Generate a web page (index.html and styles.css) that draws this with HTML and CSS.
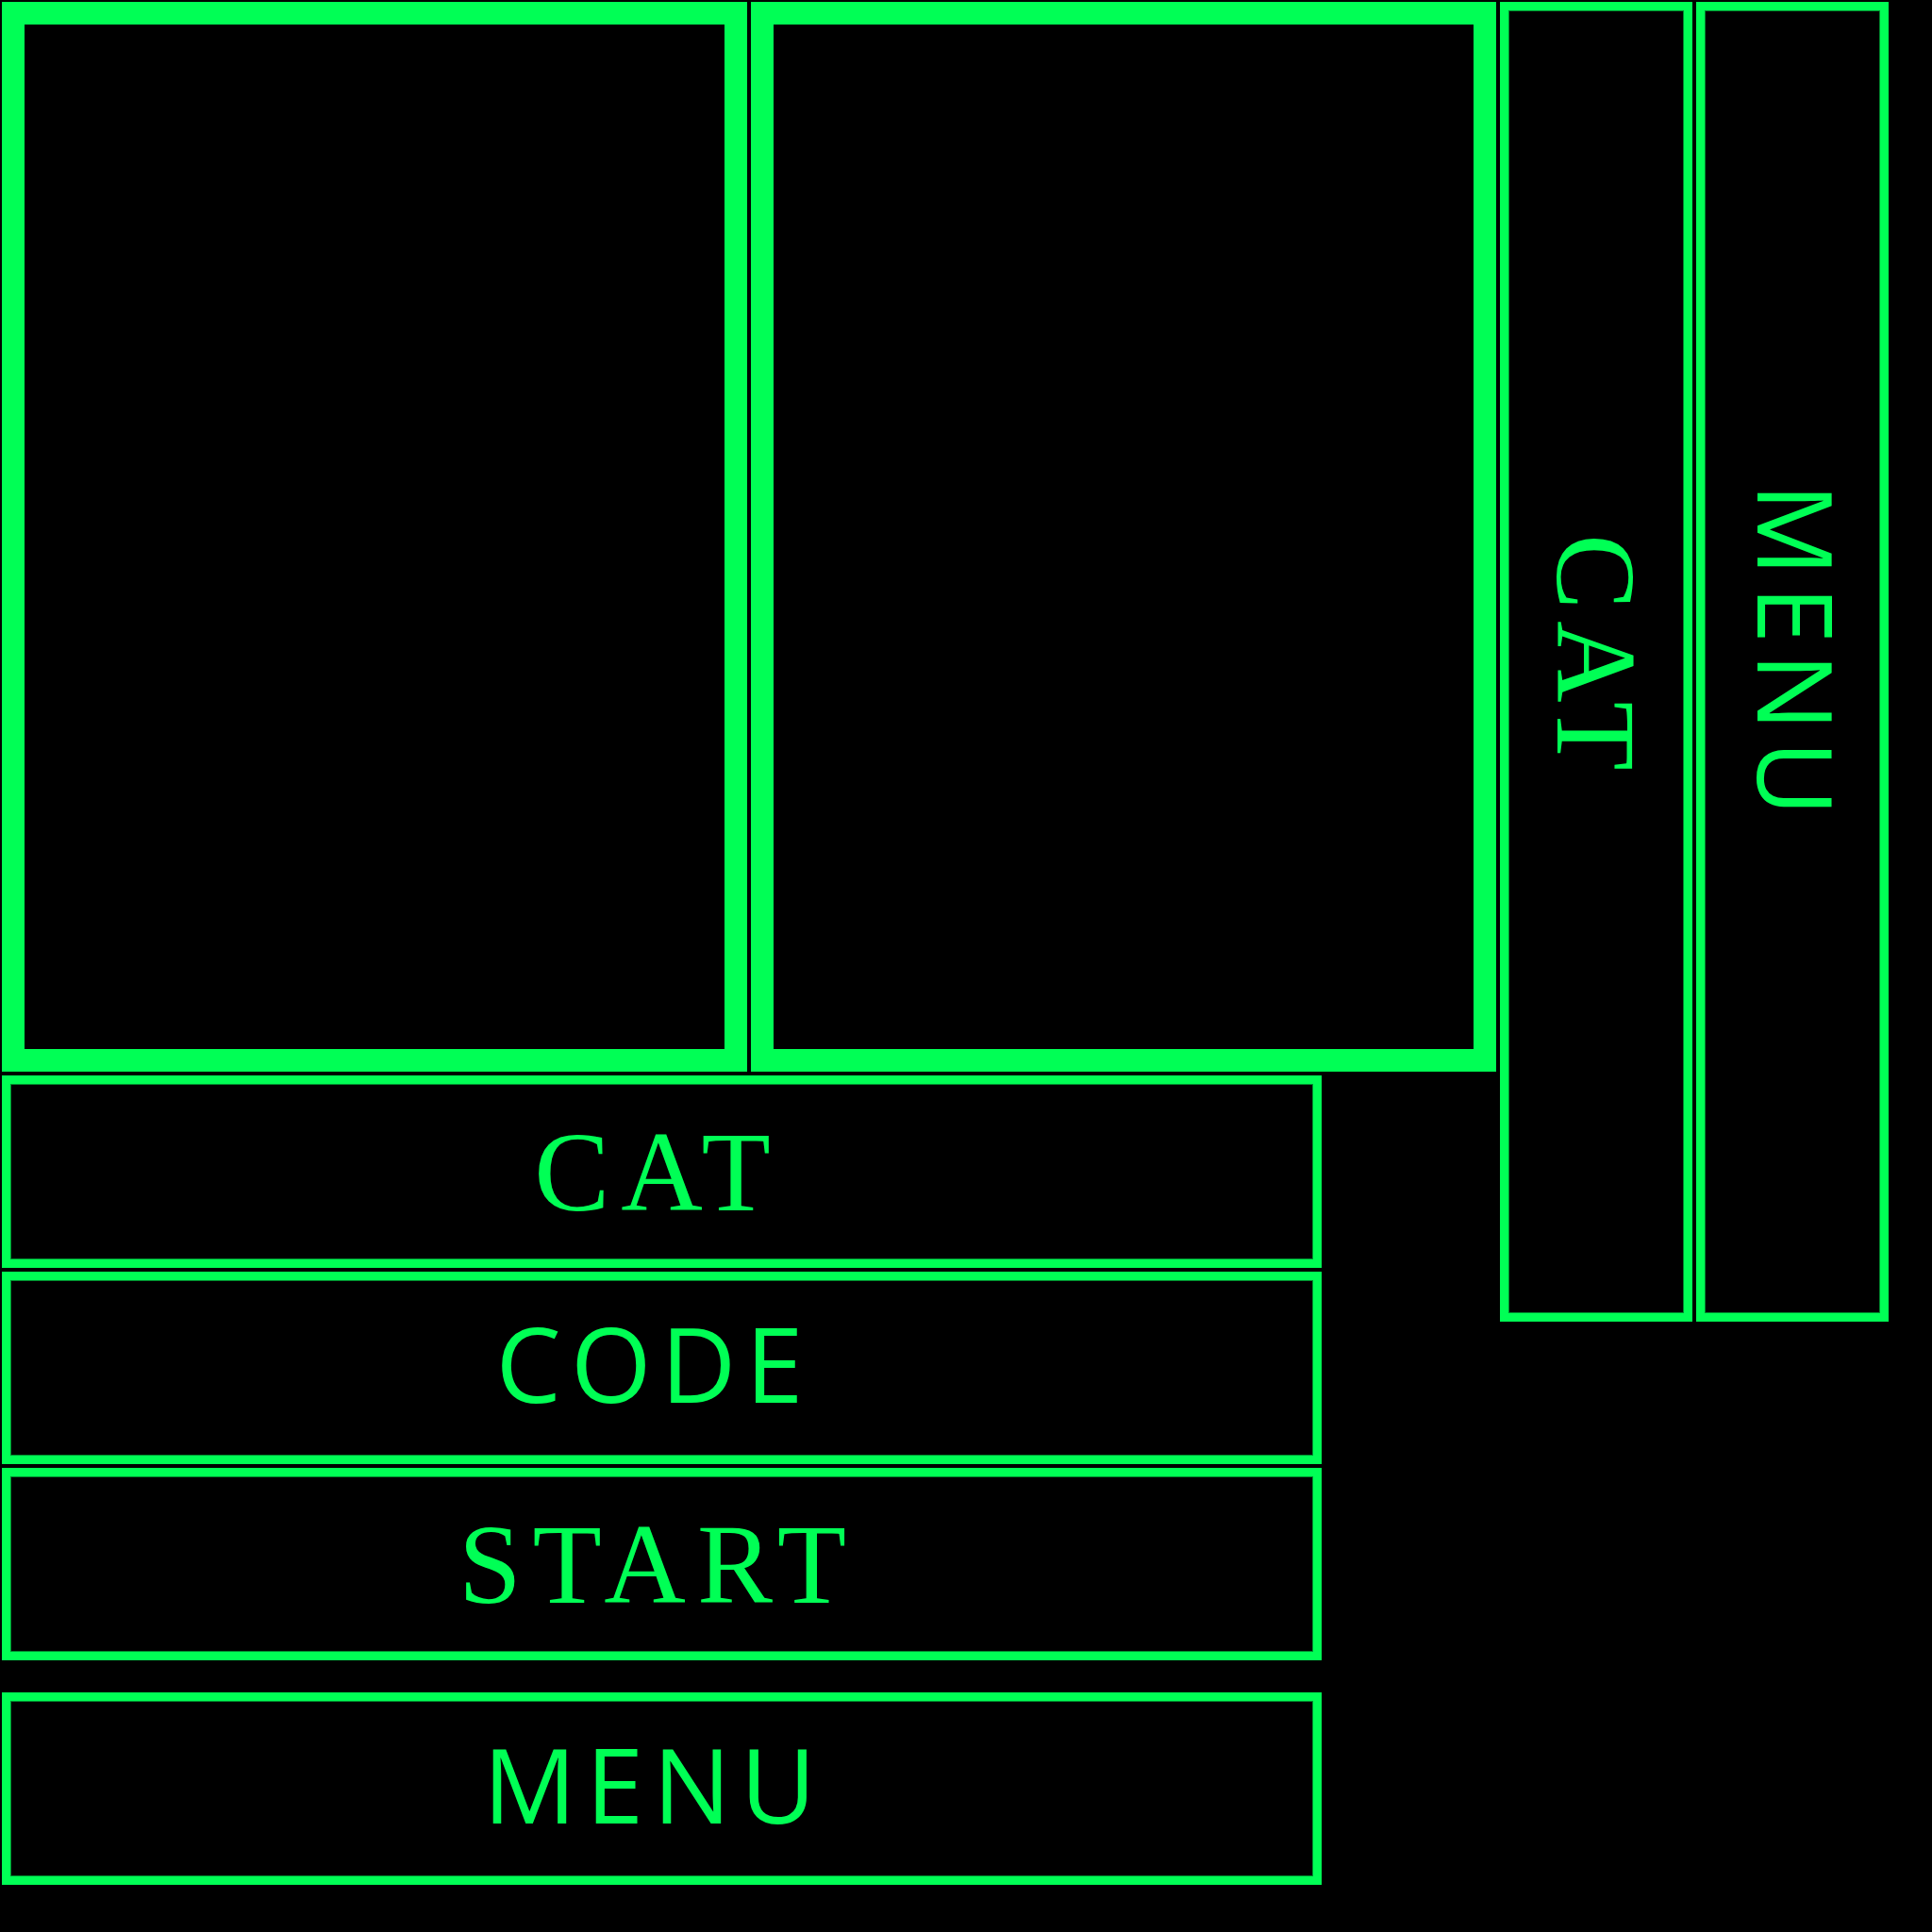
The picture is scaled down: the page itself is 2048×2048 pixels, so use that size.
FILE: index.html
```html
<!DOCTYPE html>
<html lang="en">
<head>
  <meta charset="utf-8">
  <meta name="viewport" content="width=device-width, initial-scale=1">
  <title>Cat Code</title>
  <link rel="stylesheet" href="styles.css">
</head>
<body>
  <main class="board">
    <section class="panel" aria-label="Left panel"></section>
    <section class="panel" aria-label="Right panel"></section>
    <button type="button" class="key rail serif">CAT</button>
    <button type="button" class="key rail sans">MENU</button>
    <nav class="stack" aria-label="Main">
      <button type="button" class="key bar serif">CAT</button>
      <button type="button" class="key bar sans">CODE</button>
      <button type="button" class="key bar serif">START</button>
      <button type="button" class="key bar sans apart">MENU</button>
    </nav>
  </main>
</body>
</html>
```

FILE: styles.css
```css
:root {
  --green: #00ff55;
  --green-dim: #008a2e;
  --gap: 4px;
}

* {
  box-sizing: border-box;
}

body {
  margin: 0;
  min-height: 100vh;
  background: #000;
  color: var(--green);
}

.board {
  display: grid;
  grid-template-columns: 1fr 1fr 204px 204px;
  grid-template-rows: auto auto;
  gap: var(--gap);
  padding: 2px 46px 2px 2px;
}

.panel {
  aspect-ratio: 790 / 1134;
  border: 24px solid var(--green);
}

.key {
  display: flex;
  align-items: center;
  justify-content: center;
  margin: 0;
  border: 9px solid var(--green);
  border-radius: 0;
  box-shadow: inset 0 0 0 1px var(--green-dim);
  background: #000;
  color: inherit;
  line-height: 120px;
  cursor: pointer;
}

.serif {
  font-family: "Liberation Serif", serif;
  font-size: 120px;
  letter-spacing: 12px;
}

.sans {
  font-family: "Open Sans", sans-serif;
  font-size: 110px;
  font-weight: 500;
  letter-spacing: 10px;
}

.bar {
  width: 100%;
  max-width: 1399px;
  height: 204px;
}

.bar.serif {
  padding: 2px 8px 0 0;
}

.bar.sans {
  padding: 0 16px 12px 0;
}

.rail {
  grid-row: 1 / span 2;
  align-self: start;
  min-height: 1399px;
  writing-mode: vertical-rl;
  text-orientation: sideways;
}

.rail.serif {
  padding: 0 2px 8px 0;
}

.rail.sans {
  padding: 0 0 16px 12px;
}

.stack {
  grid-column: 1 / span 2;
  grid-row: 2;
  display: flex;
  flex-direction: column;
  gap: var(--gap);
}

.apart {
  margin-top: 30px;
}
```
